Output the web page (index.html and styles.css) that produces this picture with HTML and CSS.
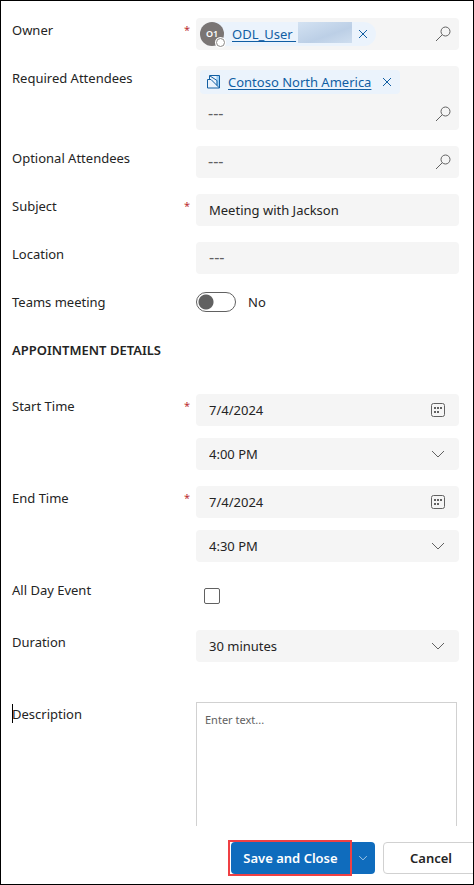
FILE: index.html
```html
<!DOCTYPE html>
<html lang="en">
<head>
<meta charset="utf-8">
<meta name="viewport" content="width=device-width, initial-scale=1">
<title>Appointment</title>
<link rel="stylesheet" href="styles.css">
</head>
<body>
<svg class="sprite" aria-hidden="true">
  <symbol id="search" viewBox="0 0 16 16"><circle cx="10.500" cy="5.500" r="4.500"/><path d="M7.300 8.700L1 15"/></symbol>
  <symbol id="close" viewBox="0 0 16 16"><path d="M4 4l8 8M12 4l-8 8"/></symbol>
  <symbol id="chevron" viewBox="0 0 16 16"><path d="M2 5l6 6 6-6"/></symbol>
  <symbol id="calendar" viewBox="0 0 16 16"><rect x="1.500" y="1.500" width="13" height="13" rx="2"/><path class="dots" d="M4 5h2v2H4zM7 5h2v2H7zM10 5h2v2h-2zM4 9h2v2H4zM7 9h2v2H7z"/></symbol>
</svg>
<form class="dialog">
  <main class="form">
    <div class="row">
      <label class="label" for="owner">Owner <span class="required">*</span></label>
      <div class="field lookup">
        <span class="chip person">
          <span class="avatar">O1<span class="presence"></span></span>
          <a href="#">ODL_User&nbsp;</a><span class="mask"></span>
          <button type="button" class="icon-button" aria-label="Remove owner"><svg class="icon"><use href="#close"/></svg></button>
        </span>
        <input id="owner" class="input" type="text">
        <button type="button" class="icon-button search" aria-label="Search owner"><svg class="icon"><use href="#search"/></svg></button>
      </div>
    </div>
    <div class="row">
      <label class="label" for="req">Required Attendees</label>
      <div class="field stacked">
        <div class="lookup">
          <span class="chip">
            <svg class="icon account" viewBox="0 0 16 16"><path class="fill" d="M10.500 2h3v11.500l-3-3z"/><path d="M3.500 5.500v-4h10v12.500M1.500 5.500h3.500l8.500 8.500H1.500zM4 2l7 4.500v5"/></svg>
            <a href="#">Contoso North America</a>
            <button type="button" class="icon-button" aria-label="Remove attendee"><svg class="icon"><use href="#close"/></svg></button>
          </span>
        </div>
        <div class="lookup">
          <input id="req" class="input" type="text" placeholder="---">
          <button type="button" class="icon-button search" aria-label="Search required attendees"><svg class="icon"><use href="#search"/></svg></button>
        </div>
      </div>
    </div>
    <div class="row">
      <label class="label" for="opt">Optional Attendees</label>
      <div class="field lookup">
        <input id="opt" class="input" type="text" placeholder="---">
        <button type="button" class="icon-button search" aria-label="Search optional attendees"><svg class="icon"><use href="#search"/></svg></button>
      </div>
    </div>
    <div class="row">
      <label class="label" for="subject">Subject <span class="required">*</span></label>
      <div class="field"><input id="subject" class="input" type="text" value="Meeting with Jackson"></div>
    </div>
    <div class="row">
      <label class="label" for="location">Location</label>
      <div class="field"><input id="location" class="input" type="text" placeholder="---"></div>
    </div>
    <div class="row">
      <label class="label" for="teams">Teams meeting</label>
      <div class="switch"><input id="teams" class="toggle" type="checkbox" role="switch"><span>No</span></div>
    </div>
    <h2 class="heading">APPOINTMENT DETAILS</h2>
    <div class="row">
      <label class="label" for="start">Start Time <span class="required">*</span></label>
      <div class="pair">
        <div class="field"><input id="start" class="input" type="text" value="7/4/2024"><button type="button" class="icon-button trailing" aria-label="Pick start date"><svg class="icon"><use href="#calendar"/></svg></button></div>
        <div class="field"><select class="input" aria-label="Start hour"><option>4:00 PM</option></select><svg class="icon arrow"><use href="#chevron"/></svg></div>
      </div>
    </div>
    <div class="row">
      <label class="label" for="end">End Time <span class="required">*</span></label>
      <div class="pair">
        <div class="field"><input id="end" class="input" type="text" value="7/4/2024"><button type="button" class="icon-button trailing" aria-label="Pick end date"><svg class="icon"><use href="#calendar"/></svg></button></div>
        <div class="field"><select class="input" aria-label="End hour"><option>4:30 PM</option></select><svg class="icon arrow"><use href="#chevron"/></svg></div>
      </div>
    </div>
    <div class="row">
      <label class="label" for="allday">All Day Event</label>
      <div class="check"><input id="allday" class="checkbox" type="checkbox"></div>
    </div>
    <div class="row">
      <label class="label" for="duration">Duration</label>
      <div class="field"><select id="duration" class="input"><option>30 minutes</option></select><svg class="icon arrow"><use href="#chevron"/></svg></div>
    </div>
    <div class="row description">
      <label class="label caret" for="desc">Description</label>
      <textarea id="desc" class="editor" placeholder="Enter text..."></textarea>
    </div>
  </main>
  <footer class="footer">
    <div class="split">
      <button type="button" class="save">Save and Close</button>
      <button type="button" class="more" aria-label="More save options"><svg class="icon"><use href="#chevron"/></svg></button>
    </div>
    <button type="button" class="cancel">Cancel</button>
  </footer>
</form>
</body>
</html>
```
FILE: styles.css
```css
* { box-sizing: border-box; }
body { margin: 0; background: #fff; color: #242424; font: 13px/24px "Noto Sans", "Open Sans", sans-serif; }
button, input, select, textarea { font: inherit; color: inherit; margin: 0; }
.sprite { position: absolute; width: 0; height: 0; }
.icon { width: 16px; height: 16px; flex: none; fill: none; stroke: currentColor; stroke-width: 1; }
.dots { fill: currentColor; stroke: none; }

.dialog { display: flex; flex-direction: column; height: 100vh; border: 1px solid #000; overflow: hidden; }
.form { flex: 1; min-height: 0; overflow: hidden; display: flex; flex-direction: column; gap: 16px; padding: 17px 14px 0 11px; }
.row { display: grid; grid-template-columns: 178px minmax(0, 1fr); column-gap: 6px; flex: none; }
.label { display: flex; justify-content: space-between; align-self: start; }
.required { color: #bc2f32; font-size: 11px; }

.field { display: flex; align-items: center; min-height: 32px; background: #f5f5f5; border-radius: 4px; position: relative; }
.field.stacked { flex-direction: column; align-items: stretch; }
.lookup { display: flex; align-items: center; height: 32px; padding: 0 8px 0 4px; }
.input { flex: 1; min-width: 0; width: 100%; height: 32px; padding: 0 13px; border: 0; background: none; outline: 0; appearance: none; }
.lookup .input { padding: 0 8px; }
.input::placeholder { color: #616161; opacity: 1; font-size: 16px; }
.icon-button { display: flex; flex: none; padding: 0; border: 0; background: none; color: #115ea3; }
.search, .trailing, .arrow { color: #616161; }
.trailing { margin-right: 13px; }
.arrow { position: absolute; right: 13px; top: 8px; pointer-events: none; }

.chip { display: flex; align-items: center; flex: none; height: 24px; padding: 0 5px 0 6px; background: #ebf3fc; border-radius: 4px; gap: 6px; }
.chip a { color: #115ea3; text-decoration: underline; text-underline-offset: 2px; }
.chip .icon-button { margin-left: 2px; }
.person { padding: 0 5px 0 0; border-radius: 12px; gap: 0; }
.avatar { position: relative; width: 24px; height: 24px; margin-right: 8px; border-radius: 50%; background: #7a7574; color: #fff; font-size: 9px; font-weight: 600; text-align: center; }
.presence { position: absolute; right: -1px; bottom: -1px; width: 9px; height: 9px; border: 1px solid #8a8886; border-radius: 50%; background: #fff; box-shadow: 0 0 0 1px #fff; }
.mask { width: 54px; height: 21px; margin: 0 1px 3px 2px; background: linear-gradient(160deg, #d3e2f2, #bccfe6 60%, #cfdeef); }
.account { color: #115ea3; }
.account .fill { fill: #9ed0f5; stroke: none; }

.switch { display: flex; align-items: center; gap: 12px; height: 24px; }
.toggle { appearance: none; width: 40px; height: 20px; border: 1px solid #616161; border-radius: 10px; background: radial-gradient(circle at 9px 9px, #616161 7px, transparent 8px); }
.heading { margin: 8px 0 16px; font-size: 13px; line-height: 24px; font-weight: 600; }
.pair { display: flex; flex-direction: column; gap: 12px; }
.check { height: 36px; padding: 10px 8px; display: flex; }
.checkbox { appearance: none; width: 16px; height: 16px; border: 1px solid #616161; border-radius: 2px; }
.description { margin-top: 24px; }
.caret { position: relative; }
.caret::before { content: ""; position: absolute; left: 0; top: 2px; width: 1px; height: 19px; background: #000; }
.editor { display: block; height: 160px; margin-right: 2px; padding: 5px 8px; border: 1px solid #d1d1d1; border-radius: 0; background: #fff; font-size: 11px; resize: none; }
.editor::placeholder { color: #616161; }

.footer { display: flex; flex: none; justify-content: flex-end; gap: 8px; margin-right: -6px; padding: 16px 0 10px; font-size: 13px; font-weight: 600; }
.split { position: relative; display: flex; height: 32px; border-radius: 4px; background: #0f6cbd; color: #fff; }
.save { position: relative; width: 119px; padding: 0; border: 0; background: none; }
.save::after { content: ""; position: absolute; inset: -2px -2px -2px -3px; border: 2px solid #ef4044; }
.more { display: flex; align-items: center; justify-content: center; width: 25px; padding: 0; border: 0; background: none; }
.more .icon { width: 10px; height: 10px; }
.cancel { width: 96px; height: 32px; padding: 0; border: 1px solid #d1d1d1; border-radius: 4px; background: #fff; }
```
